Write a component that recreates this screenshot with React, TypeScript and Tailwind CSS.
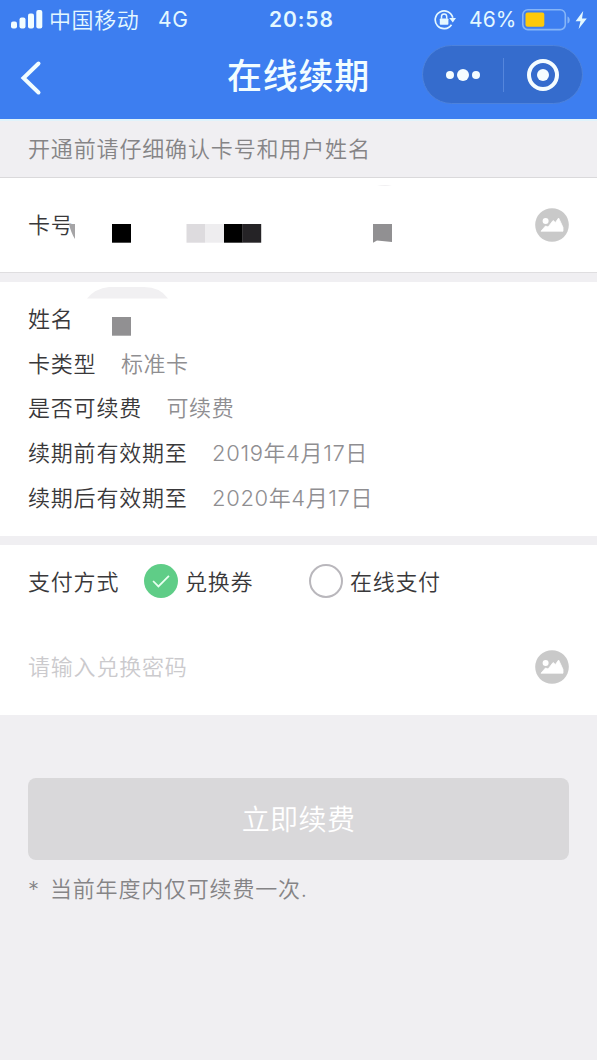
import { useState } from "react"

const infoList = [
  { label: '卡类型', value: '标准卡' },
  { label: '是否可续费', value: '可续费' },
  { label: '续期前有效期至', value: '2019年4月17日' },
  { label: '续期后有效期至', value: '2020年4月17日' },
]

const PictureIcon = () => (
  <svg width="34" height="34" viewBox="0 0 34 34" className="shrink-0">
    <circle cx="17" cy="17" r="16.8" fill="#c9c9c9" />
    <circle cx="10.600" cy="13" r="3" fill="#fff" />
    <path d="M6 23.200L10.500 18l2.600 1 5-6.500 2.300 2 3.200-4.500 2.400 5 2 4.500v3.700z" fill="#fff" stroke="#fff" strokeWidth="0.8" strokeLinejoin="round" />
  </svg>
)

const StatusBar = () => (
  <div className="flex h-[39px] items-center font-normal text-[#e4f8ff]">
    <svg width="32" height="20" viewBox="0 0 32 20" className="ml-[11px]" fill="#f2fdff">
      <rect x="0" y="11.500" width="6" height="7" rx="2" />
      <rect x="8.500" y="7.500" width="6" height="11" rx="2" />
      <rect x="17" y="3.500" width="6" height="15" rx="2" />
      <rect x="25.300" y="0" width="6" height="18.500" rx="2" />
    </svg>
    <span className="ml-[6px] w-[109px] pt-px text-[22px] font-[350] tracking-[0.6px]">中国移动</span>
    <span className="w-[111px] text-[21px]">4G</span>
    <span className="w-[165px] text-[21px] font-semibold tracking-[0.9px]">20:58</span>
    <svg width="22" height="22" viewBox="0 0 22 22" fill="none" className="shrink-0">
      <path d="M17.500 15.800a8.900 8.900 0 1 1 1.300-7" stroke="#e4f8ff" strokeWidth="1.700" />
      <path d="M15.200 9h6.800l-3.200 4.500z" fill="#e4f8ff" />
      <rect x="5.800" y="9.400" width="8.600" height="6.300" rx="0.800" fill="#e4f8ff" />
      <path d="M7.500 9.800V7.600a2.600 2.600 0 0 1 5.200 0v2.200" stroke="#e4f8ff" strokeWidth="1.500" />
    </svg>
    <span className="ml-[13px] w-[52px] text-[21px] tracking-[0.1px]">46%</span>
    <svg width="50" height="22" viewBox="0 0 50 22" fill="none" className="shrink-0">
      <rect x="1.800" y="0.800" width="42.500" height="19.800" rx="5" stroke="#86b5f7" strokeWidth="1.600" />
      <rect x="4.500" y="3.500" width="18.800" height="14.200" rx="2" fill="#fdc90a" />
      <path d="M46.500 7.500c3 1 3 6 0 7z" fill="#86b5f7" />
    </svg>
    <svg width="13" height="20" viewBox="0 0 13 20" className="ml-[4px] shrink-0" fill="#e4f8ff">
      <path d="M8.200 1L0.600 11.300h4.900L3.600 19l8.200-10.600H7z" />
    </svg>
  </div>
)

const NavBar = () => (
  <div className="relative flex h-[80px] items-center justify-center">
    <svg width="22" height="36" viewBox="0 0 22 36" fill="none" className="absolute top-[21px] left-[20px]">
      <path d="M18.500 3.500L3.500 18l15 14.500" stroke="#f2fdff" strokeWidth="4" strokeLinecap="round" strokeLinejoin="miter" />
    </svg>
    <h1 className="-mt-[5px] text-[35px] font-medium tracking-[0.8px] text-[#f2fdff]">在线续期</h1>
    <div className="absolute top-[6px] right-[14px] flex h-[59px] w-[161px] items-center rounded-full border border-[#4d82dc] bg-[#356ccd]">
      <div className="flex w-[80px] items-center justify-center gap-[3px]">
        <i className="h-[8px] w-[8px] rounded-full bg-[#f5fdff]" />
        <i className="h-[12px] w-[12px] rounded-full bg-[#f5fdff]" />
        <i className="h-[8px] w-[8px] rounded-full bg-[#f5fdff]" />
      </div>
      <div className="h-[34px] w-px bg-[#5586dc]" />
      <div className="flex flex-1 items-center justify-center">
        <div className="flex h-[32px] w-[32px] items-center justify-center rounded-full border-4 border-[#f5fdff]">
          <i className="h-[12px] w-[12px] rounded-full bg-[#f5fdff]" />
        </div>
      </div>
    </div>
  </div>
)

// masked card number
const CardMask = () => (
  <svg width="326" height="60" viewBox="0 0 326 60" className="absolute top-[6px] left-[67px]">
    <path d="M2 40h6v15q-4-6-6-15z" fill="#a5a4a6" />
    <rect x="45" y="40" width="19" height="18.700" fill="#000" />
    <rect x="119.500" y="40" width="18.700" height="18.700" fill="#dddbde" />
    <rect x="138" y="40" width="19" height="18.700" fill="#eeedef" />
    <rect x="157" y="40" width="18.700" height="18.700" fill="#000" />
    <rect x="175.500" y="40" width="18.700" height="18.700" fill="#252326" />
    <path d="M306 40h19v18l-15-1.500-4 2.200z" fill="#919092" />
    <path d="M310 2q8-2 15 0z" fill="#f1f0f2" />
  </svg>
)

// masked user name
const NameMask = () => (
  <svg width="84" height="54" viewBox="0 0 84 54" className="absolute top-[3px] left-[86px]">
    <path d="M1 13.500q8-10 22-11.500h35q16 0 24 11.500z" fill="#f1f0f2" />
    <rect x="26" y="32" width="19" height="18.700" fill="#919092" />
  </svg>
)

const App = () => {
  const [payType, setPayType] = useState<string>('coupon')

  return (
    <div className="min-h-[1060px] w-full overflow-hidden bg-[#f0eff2] font-['Inter','Noto_Sans_CJK_SC',sans-serif] text-[22px] font-[350] tracking-[0.8px] text-[#39383a]">
      <header className="h-[119px] bg-[#3d7ef0]">
        <StatusBar />
        <NavBar />
      </header>

      <div className="flex h-[59px] items-center border-t-2 border-b border-t-[#e0f3fb] border-b-[#dad9db] pl-[28px] text-[#858486]">
        <span className="tracking-[0.850px]">开通前请仔细确认卡号和用户姓名</span>
      </div>

      <div className="relative flex h-[95px] items-center justify-between border-b border-[#dfdee0] bg-white pr-[28px] pl-[28px]">
        <span>卡号</span>
        <CardMask />
        <PictureIcon />
      </div>

      <div className="relative mt-[9px] h-[254px] bg-white pt-[15px] pl-[28px]">
        <NameMask />
        <div className="flex h-[44.800px] items-center">姓名</div>
        {infoList.map((item) => (
          <div key={item.label} className="flex h-[44.800px] items-center gap-[24.500px]">
            <span>{item.label}</span>
            <span className="tracking-[0.6px] text-[#8f8e91]">{item.value}</span>
          </div>
        ))}
      </div>

      <div className="mt-[9px] h-[170px] bg-white px-[28px]">
        <div className="flex h-[72px] items-center">
          <span className="w-[116px] pt-[2px]">支付方式</span>
          <button className="flex w-[165px] items-center gap-[7px] tracking-[0.7px]" onClick={() => setPayType('coupon')}>
            <Radio checked={payType === 'coupon'} />
            <span className="pt-[2px]">兑换券</span>
          </button>
          <button className="flex items-center gap-[7px] tracking-[0.7px]" onClick={() => setPayType('online')}>
            <Radio checked={payType === 'online'} />
            <span className="pt-[2px]">在线支付</span>
          </button>
        </div>
        <div className="flex h-[100px] items-center justify-between text-[#cbcacd]">
          <span>请输入兑换密码</span>
          <PictureIcon />
        </div>
      </div>

      <div className="px-[28px] pt-[63px]">
        <button className="h-[82px] w-full rounded-lg bg-[#d9d8da] pt-[2px] text-[28px] tracking-[0.4px] text-white">立即续费</button>
        <p className="mt-[13px] flex text-[#858486]"><span className="w-[22px]">*</span>当前年度内仅可续费一次.</p>
      </div>
    </div>
  )
}

const Radio = ({ checked }: { checked: boolean }) => {
  if (!checked) return <i className="-mt-px h-[34px] w-[34px] shrink-0 rounded-full border-2 border-[#b9b7bc]" />
  return (
    <svg width="34" height="34" viewBox="0 0 33 33" fill="none" className="-mt-px shrink-0">
      <circle cx="16.500" cy="16.500" r="16.500" fill="#5fcd87" />
      <path d="M8.800 16.500l5.200 5.300 10.200-10.300" stroke="#e8fff0" strokeWidth="1.700" />
    </svg>
  )
}

export default App
